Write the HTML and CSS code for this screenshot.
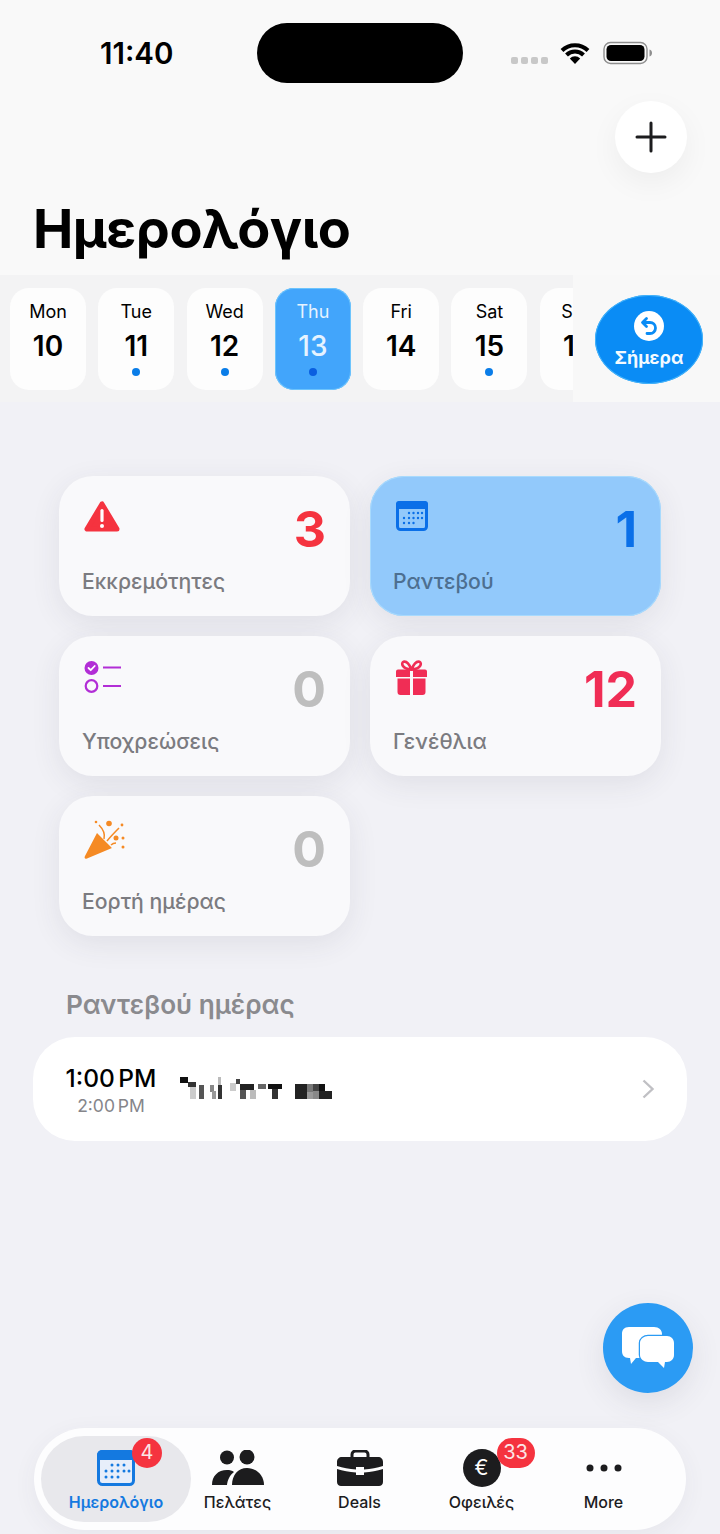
FILE: index.html
```html
<!DOCTYPE html>
<html lang="el">
<head>
  <meta charset="UTF-8">
  <meta name="viewport" content="width=device-width, initial-scale=1.0">
  <title>Ημερολόγιο</title>
  <link rel="stylesheet" href="styles.css">
</head>
<body>
  <div class="page">
    <header class="top">
      <div class="statusbar">
        <span class="time">11:40</span>
        <div class="island"></div>
        <div class="status-icons">
          <div class="signal"><i></i><i></i><i></i><i></i></div>
          <svg class="wifi" width="32" height="24" viewBox="0 0 32 24">
            <path d="M3 9.500a18.500 18.500 0 0 1 26 0M7.500 14a12 12 0 0 1 17 0" fill="none" stroke="#000" stroke-width="4"/>
            <path d="M10.800 17.400a7.400 7.400 0 0 1 10.400 0L16 23z" fill="#000"/>
          </svg>
          <svg class="battery" width="50" height="24" viewBox="0 0 50 24">
            <rect x="1" y="1.500" width="43" height="21" rx="6.500" fill="none" stroke="#8e8e8e" stroke-width="1.400"/>
            <rect x="3.500" y="4" width="38" height="16" rx="4.500" fill="#000"/>
            <path d="M46.500 8.500c1.600.5 2.500 1.800 2.500 3.500s-.9 3-2.500 3.500z" fill="#8e8e8e"/>
          </svg>
        </div>
      </div>
      <div class="add-row">
        <button class="add-btn">
          <svg width="32" height="32" viewBox="0 0 32 32"><path d="M16 2v28M2 16h28" stroke="#1c1c1e" stroke-width="3" stroke-linecap="round"/></svg>
        </button>
      </div>
      <h1>Ημερολόγιο</h1>
    </header>

    <section class="strip">
      <div class="days">
        <div class="day"><span class="day-name">Mon</span><span class="day-num">10</span></div>
        <div class="day"><span class="day-name">Tue</span><span class="day-num">11</span><i class="dot"></i></div>
        <div class="day"><span class="day-name">Wed</span><span class="day-num">12</span><i class="dot"></i></div>
        <div class="day day-active"><span class="day-name">Thu</span><span class="day-num">13</span><i class="dot"></i></div>
        <div class="day"><span class="day-name">Fri</span><span class="day-num">14</span></div>
        <div class="day"><span class="day-name">Sat</span><span class="day-num">15</span><i class="dot"></i></div>
        <div class="day"><span class="day-name">Sun</span><span class="day-num">16</span></div>
      </div>
      <div class="today-wrap">
        <button class="today-btn">
          <svg width="32" height="32" viewBox="0 0 32 32">
            <circle cx="16" cy="16" r="15" fill="#fff"/>
            <path d="M13.500 8.500 9.500 12.500l4 4M10 12.500h7a5.500 5.500 0 0 1 0 11h-3" fill="none" stroke="#0a8cf5" stroke-width="2.800" stroke-linecap="round" stroke-linejoin="round"/>
          </svg>
          <span>Σήμερα</span>
        </button>
      </div>
    </section>

    <section class="summary">
      <div class="card">
        <div class="card-top">
          <svg class="card-icon" width="36" height="32" viewBox="0 -1 36 32">
            <path d="M18 3 3 28h30z" fill="#f5333f" stroke="#f5333f" stroke-width="5" stroke-linejoin="round"/>
            <path d="M18 9.500v10" stroke="#fff" stroke-width="3.200" stroke-linecap="round"/>
            <circle cx="18" cy="25" r="2" fill="#fff"/>
          </svg>
          <span class="count count-red">3</span>
        </div>
        <span class="card-label">Εκκρεμότητες</span>
      </div>
      <div class="card card-active">
        <div class="card-top">
          <svg class="card-icon" width="34" height="32" viewBox="0 0 34 32">
            <rect x="2.500" y="2.500" width="29" height="27" rx="3" fill="none" stroke="#0a6fe8" stroke-width="3"/>
            <path d="M4 1h26a3 3 0 0 1 3 3v5H1V4a3 3 0 0 1 3-3z" fill="#0a6fe8"/>
            <g fill="#0a6fe8">
              <circle cx="14" cy="13" r="1.200"/><circle cx="18.500" cy="13" r="1.200"/><circle cx="23" cy="13" r="1.200"/><circle cx="27" cy="13" r="1.200"/>
              <circle cx="9" cy="18" r="1.200"/><circle cx="14" cy="18" r="1.200"/><circle cx="18.500" cy="18" r="1.200"/><circle cx="23" cy="18" r="1.200"/><circle cx="27" cy="18" r="1.200"/>
              <circle cx="9" cy="23" r="1.200"/><circle cx="14" cy="23" r="1.200"/><circle cx="18.500" cy="23" r="1.200"/>
            </g>
          </svg>
          <span class="count count-blue">1</span>
        </div>
        <span class="card-label">Ραντεβού</span>
      </div>
      <div class="card">
        <div class="card-top">
          <svg class="card-icon" width="38" height="34" viewBox="0 0 38 34">
            <circle cx="7.500" cy="8" r="7" fill="#b22ed6"/>
            <path d="M4.500 8l2.200 2.200 4-4.200" fill="none" stroke="#fff" stroke-width="1.800" stroke-linecap="round" stroke-linejoin="round"/>
            <circle cx="7.500" cy="26" r="5.800" fill="none" stroke="#b22ed6" stroke-width="2.200"/>
            <path d="M19 7.500h18M19 26h18" stroke="#b22ed6" stroke-width="2.200"/>
          </svg>
          <span class="count count-grey">0</span>
        </div>
        <span class="card-label">Υποχρεώσεις</span>
      </div>
      <div class="card">
        <div class="card-top">
          <svg class="card-icon" width="33" height="35" viewBox="0 0 33 35">
            <path d="M16.500 9.500C14 3.500 11 1 8.500 1.800S6.500 9 16.500 9.500zm0 0C19 3.500 22 1 24.500 1.800S26.500 9 16.500 9.500z" fill="none" stroke="#f02d55" stroke-width="2.600"/>
            <path d="M3 9.500h12V17H1v-5.500a2 2 0 0 1 2-2zm15 0h12a2 2 0 0 1 2 2V17H18zM2.500 18.500H15V35H5.500a3 3 0 0 1-3-3zm15.500 0h12.500V32a3 3 0 0 1-3 3H18z" fill="#f02d55"/>
          </svg>
          <span class="count count-pink">12</span>
        </div>
        <span class="card-label">Γενέθλια</span>
      </div>
      <div class="card">
        <div class="card-top">
          <svg class="card-icon" width="42" height="42" viewBox="0 0 42 42">
            <path d="M13 13 1 36c-1 2 0 3.500 2 2.500L28 28z" fill="#f58a24"/>
            <path d="M14 12c3 0 7 2.500 10 6.500s5 8 4.500 10" fill="none" stroke="#f9f9fb" stroke-width="1.400"/>
            <path d="M20 19c1-4 0-9-5-14M23 21c4-5 8-9 12-13M27 25c2-2 3-2 5-2" fill="none" stroke="#f58a24" stroke-width="1.500"/>
            <g fill="#f58a24">
              <circle cx="25" cy="3.500" r="2.800"/><circle cx="12" cy="2" r="1.300"/><circle cx="38" cy="5" r="1.400"/>
              <circle cx="32" cy="18" r="2.500"/><circle cx="39" cy="18" r="1.500"/><circle cx="39" cy="27" r="1.500"/>
            </g>
          </svg>
          <span class="count count-grey">0</span>
        </div>
        <span class="card-label">Εορτή ημέρας</span>
      </div>
    </section>

    <h2 class="section-title">Ραντεβού ημέρας</h2>
    <div class="appointment">
      <div class="appt-time">
        <span class="appt-start">1:00 PM</span>
        <span class="appt-end">2:00 PM</span>
      </div>
      <svg class="appt-name" width="154" height="24" viewBox="0 0 154 24" shape-rendering="crispEdges">
        <rect x="0" y="0" width="8" height="6" fill="#111"/><rect x="8" y="5" width="8" height="5" fill="#333"/>
        <rect x="10" y="10" width="6" height="12" fill="#ccc"/><rect x="19" y="8" width="5" height="14" fill="#555"/>
        <rect x="30" y="8" width="4" height="7" fill="#888"/><rect x="32" y="14" width="4" height="8" fill="#999"/>
        <rect x="38" y="0" width="3" height="8" fill="#bbb"/><rect x="38" y="8" width="4" height="14" fill="#333"/>
        <rect x="50" y="6" width="6" height="8" fill="#ccc"/><rect x="56" y="2" width="4" height="5" fill="#444"/>
        <rect x="60" y="7" width="14" height="6" fill="#222"/><rect x="60" y="13" width="6" height="9" fill="#555"/><rect x="70" y="13" width="6" height="9" fill="#bbb"/>
        <rect x="78" y="7" width="8" height="5" fill="#666"/><rect x="88" y="7" width="14" height="5" fill="#111"/><rect x="92" y="12" width="6" height="10" fill="#333"/>
        <rect x="115" y="7" width="12" height="15" fill="#222"/><rect x="127" y="7" width="6" height="8" fill="#777"/><rect x="127" y="15" width="6" height="7" fill="#999"/>
        <rect x="133" y="7" width="6" height="7" fill="#444"/><rect x="139" y="7" width="6" height="7" fill="#111"/><rect x="133" y="14" width="6" height="8" fill="#888"/><rect x="139" y="14" width="13" height="8" fill="#222"/>
      </svg>
      <svg class="chevron" width="14" height="22" viewBox="0 0 14 22"><path d="M2.500 2.500 11.500 11l-9 8.500" fill="none" stroke="#c0c0c4" stroke-width="2.400"/></svg>
    </div>

    <div class="spacer">
      <button class="chat-btn">
        <svg width="54" height="44" viewBox="0 0 54 44">
          <path d="M8 1h25c5 0 8 3 8 7v24H15l-5 6-1-6H8c-5 0-7-3-7-7V8c0-4 2-7 7-7z" fill="#fff"/>
          <path d="M27 10h19c4 0 7 3 7 7v12c0 4-3 7-7 7h-2l-1 6-6-6H27c-4 0-8-3-8-7V17c0-4 4-7 8-7z" fill="#fff" stroke="#2b9bf4" stroke-width="2.500" paint-order="stroke"/>
        </svg>
      </button>
    </div>

    <nav class="tabbar">
      <div class="tab tab-active">
        <div class="tab-icon">
          <svg width="38" height="36" viewBox="0 0 38 36">
            <rect x="1.500" y="1.500" width="35" height="33" rx="4" fill="#e7eefa" stroke="#1479e0" stroke-width="3"/>
            <path d="M5 0h28a5 5 0 0 1 5 5v5H0V5a5 5 0 0 1 5-5z" fill="#1479e0"/>
            <g fill="#1479e0">
              <circle cx="15" cy="15" r="1.500"/><circle cx="21" cy="15" r="1.500"/><circle cx="27" cy="15" r="1.500"/>
              <circle cx="9" cy="21" r="1.500"/><circle cx="15" cy="21" r="1.500"/><circle cx="21" cy="21" r="1.500"/><circle cx="27" cy="21" r="1.500"/><circle cx="32" cy="21" r="1.500"/>
              <circle cx="9" cy="27" r="1.500"/><circle cx="15" cy="27" r="1.500"/><circle cx="21" cy="27" r="1.500"/>
            </g>
          </svg>
          <span class="badge badge-cal">4</span>
        </div>
        <span class="tab-label">Ημερολόγιο</span>
      </div>
      <div class="tab">
        <div class="tab-icon">
          <svg width="52" height="36" viewBox="0 0 52 36">
            <circle cx="15" cy="7.500" r="7" fill="#1c1c1e"/>
            <circle cx="35" cy="7" r="7.500" fill="#1c1c1e"/>
            <path d="M0 35c0-9 6-15 15-15 3 0 5 .6 7 2-4 3-6.500 8-7 13z" fill="#1c1c1e"/>
            <path d="M20 35c0-10 6-17 15-17s17 7 17 17z" fill="#1c1c1e"/>
          </svg>
        </div>
        <span class="tab-label">Πελάτες</span>
      </div>
      <div class="tab">
        <div class="tab-icon">
          <svg width="46" height="36" viewBox="0 0 46 36">
            <path d="M15 8V4.500C15 2.500 16.500 1 18.500 1h9C29.500 1 31 2.500 31 4.500V8" fill="none" stroke="#1c1c1e" stroke-width="3"/>
            <path d="M5 7h36c3 0 5 2 5 5v4c-6 2-12 3-19 3.500V17h-8v2.500C12 19 6 18 0 16v-4c0-3 2-5 5-5z" fill="#1c1c1e"/>
            <path d="M0 19c6 2 12 3 19 3.500V25h8v-2.500c7-.5 13-1.500 19-3.500v13c0 2.500-2 4-4 4H4c-2 0-4-1.500-4-4z" fill="#1c1c1e"/>
          </svg>
        </div>
        <span class="tab-label">Deals</span>
      </div>
      <div class="tab">
        <div class="tab-icon">
          <div class="euro">€</div>
          <span class="badge badge-euro">33</span>
        </div>
        <span class="tab-label">Οφειλές</span>
      </div>
      <div class="tab">
        <div class="tab-icon">
          <svg width="36" height="10" viewBox="0 0 36 10"><circle cx="4" cy="5" r="3.500" fill="#1c1c1e"/><circle cx="18" cy="5" r="3.500" fill="#1c1c1e"/><circle cx="32" cy="5" r="3.500" fill="#1c1c1e"/></svg>
        </div>
        <span class="tab-label">More</span>
      </div>
    </nav>
  </div>
</body>
</html>
```

FILE: styles.css
```css
html, body {
  margin: 0;
  padding: 0;
}
body {
  font-family: Inter, "Noto Sans", sans-serif;
  background-color: #f1f1f6;
  color: #000;
}
button {
  border: none;
  padding: 0;
  font-family: inherit;
}
.page {
  width: 720px;
  height: 1534px;
  display: flex;
  flex-direction: column;
  overflow: hidden;
}

/* header */
.top {
  height: 275px;
  background-color: #f9f9f9;
  display: flex;
  flex-direction: column;
}
.statusbar {
  display: flex;
  align-items: flex-start;
  padding-top: 23px;
  height: 60px;
}
.time {
  width: 100px;
  margin-left: 100px;
  margin-top: 14px;
  font-size: 29.500px;
  line-height: 32px;
  font-weight: 600;
}
.island {
  width: 206px;
  height: 60px;
  margin-left: 57px;
  border-radius: 30px;
  background-color: #000;
}
.status-icons {
  display: flex;
  align-items: center;
  margin-left: 48px;
  height: 60px;
}
.signal {
  display: flex;
  gap: 3px;
  margin-top: 14px;
  margin-right: 11px;
}
.signal i {
  width: 7px;
  height: 7px;
  border-radius: 2px;
  background-color: #c8c8c8;
}
.wifi {
  margin-right: 12px;
}
.add-row {
  display: flex;
  justify-content: flex-end;
  padding-right: 33px;
  margin-top: 18px;
}
.add-btn {
  width: 72px;
  height: 72px;
  border-radius: 50%;
  background-color: #fff;
  box-shadow: 0 10px 30px rgba(0, 0, 0, 0.05);
  display: flex;
  align-items: center;
  justify-content: center;
}
h1 {
  margin: 24px 0 0 33px;
  font-size: 54px;
  line-height: 64px;
  font-weight: 700;
  letter-spacing: -0.5px;
}

/* week strip */
.strip {
  height: 127px;
  display: flex;
  background-color: #f3f3f4;
}
.days {
  width: 573px;
  box-sizing: border-box;
  padding: 13px 0 0 10px;
  display: flex;
  gap: 12.300px;
  overflow: hidden;
}
.day {
  flex: none;
  width: 76px;
  height: 102px;
  border-radius: 19px;
  background-color: #fdfdfd;
  display: flex;
  flex-direction: column;
  align-items: center;
  position: relative;
}
.day-name {
  margin-top: 13px;
  font-size: 18px;
  line-height: 22px;
}
.day-num {
  margin-top: 5px;
  font-size: 28px;
  line-height: 36px;
  font-weight: 600;
}
.dot {
  position: absolute;
  bottom: 14px;
  width: 8px;
  height: 8px;
  border-radius: 50%;
  background-color: #0a7de8;
}
.day-active {
  background-color: #42a5fb;
  box-shadow: inset 0 0 0 1px #6cc4fd;
  color: #e6f3ff;
}
.day-active .day-num {
  font-weight: 500;
}
.day-active .dot {
  background-color: #0a5fe0;
}
.today-wrap {
  flex: 1;
  background-color: #f8f8f8;
  position: relative;
}
.today-btn {
  position: absolute;
  left: 22px;
  top: 20px;
  width: 108px;
  height: 89px;
  border-radius: 50%;
  background-color: #0a8cf5;
  box-shadow: inset 0 0 0 1px #45b4fa;
  color: #f4faff;
  font-size: 18px;
  font-weight: 700;
  display: flex;
  flex-direction: column;
  align-items: center;
  gap: 5px;
  padding-top: 15px;
  box-sizing: border-box;
}

/* summary cards */
.summary {
  margin-top: 74px;
  padding: 0 59px;
  display: grid;
  grid-template-columns: 291px 291px;
  grid-auto-rows: 140px;
  gap: 20px;
}
.card {
  box-sizing: border-box;
  border-radius: 34px;
  background-color: #f9f9fb;
  box-shadow: 0 8px 30px rgba(60, 60, 80, 0.09);
  padding: 24px 24px 0 24px;
  display: flex;
  flex-direction: column;
}
.card-top {
  height: 67px;
  display: flex;
  justify-content: space-between;
  align-items: flex-start;
}
.card-icon {
  margin-left: 1px;
  flex: none;
}
.count {
  font-size: 50px;
  line-height: 58px;
  font-weight: 700;
}
.count-red { color: #f5333f; }
.count-blue { color: #0a6fe8; }
.count-grey { color: #bebebe; }
.count-pink { color: #f02d55; }
.card-label {
  font-size: 21.200px;
  line-height: 28px;
  font-weight: 500;
  color: #7b7b80;
  margin-left: -1px;
}
.card-active {
  background-color: #92c9fb;
  box-shadow: 0 8px 30px rgba(60, 60, 80, 0.09), inset 0 0 0 1px #a8dafd;
}
.card-active .card-label {
  color: #4d6f90;
}

/* appointments */
.section-title {
  margin: 54px 0 0 66px;
  font-size: 26.200px;
  line-height: 30px;
  font-weight: 600;
  color: #8a8a8e;
}
.appointment {
  margin: 17px 33px 0;
  height: 104px;
  border-radius: 42px;
  background-color: #fff;
  display: flex;
  align-items: center;
  padding: 0 32px;
}
.appt-time {
  display: flex;
  flex-direction: column;
  align-items: center;
  width: 92px;
  padding-top: 3px;
}
.appt-start {
  font-size: 24.500px;
  line-height: 30px;
  font-weight: 500;
  word-spacing: -3px;
}
.appt-end {
  margin-top: 1px;
  font-size: 17.500px;
  line-height: 24px;
  color: #85858a;
  word-spacing: -2px;
}
.appt-name {
  margin-left: 23px;
  flex: none;
}
.chevron {
  margin-left: auto;
}

/* floating chat button */
.spacer {
  flex: 1;
  display: flex;
  justify-content: flex-end;
  align-items: flex-start;
  padding: 162px 27px 0 0;
}
.chat-btn {
  width: 90px;
  height: 90px;
  border-radius: 50%;
  background-color: #2b9bf4;
  box-shadow: 0 10px 30px rgba(60, 60, 80, 0.1);
  display: flex;
  align-items: center;
  justify-content: center;
}

/* bottom tabs */
.tabbar {
  margin: 0 34px 4px;
  height: 102px;
  box-sizing: border-box;
  padding: 8px 7px;
  border-radius: 51px;
  background-color: #fdfdfe;
  box-shadow: 0 6px 24px rgba(60, 60, 80, 0.06);
  display: flex;
}
.tab {
  flex: none;
  width: 122px;
  border-radius: 43px;
  display: flex;
  flex-direction: column;
  align-items: center;
  justify-content: flex-end;
  padding-bottom: 9px;
  box-sizing: border-box;
}
.tab-active {
  width: 150px;
  margin-right: -14.500px;
  background-color: #e8e8ec;
}
.tab-icon {
  height: 38px;
  display: flex;
  align-items: center;
  justify-content: center;
  position: relative;
  margin-bottom: 4px;
}
.tab-label {
  font-size: 16px;
  line-height: 22px;
  font-weight: 500;
  color: #1c1c1e;
}
.tab-active .tab-label {
  color: #1479e0;
  font-weight: 600;
}
.euro {
  width: 38px;
  height: 38px;
  border-radius: 50%;
  background-color: #1c1c1e;
  color: #fff;
  font-size: 21px;
  line-height: 38px;
  text-align: center;
}
.badge {
  position: absolute;
  height: 30px;
  min-width: 30px;
  box-sizing: border-box;
  border-radius: 15px;
  background-color: #f5333f;
  color: #fbe6e6;
  font-size: 20px;
  line-height: 28px;
  text-align: center;
}
.badge-cal {
  right: -27px;
  top: -11px;
}
.badge-euro {
  right: -34px;
  top: -11px;
  min-width: 38px;
}
```
